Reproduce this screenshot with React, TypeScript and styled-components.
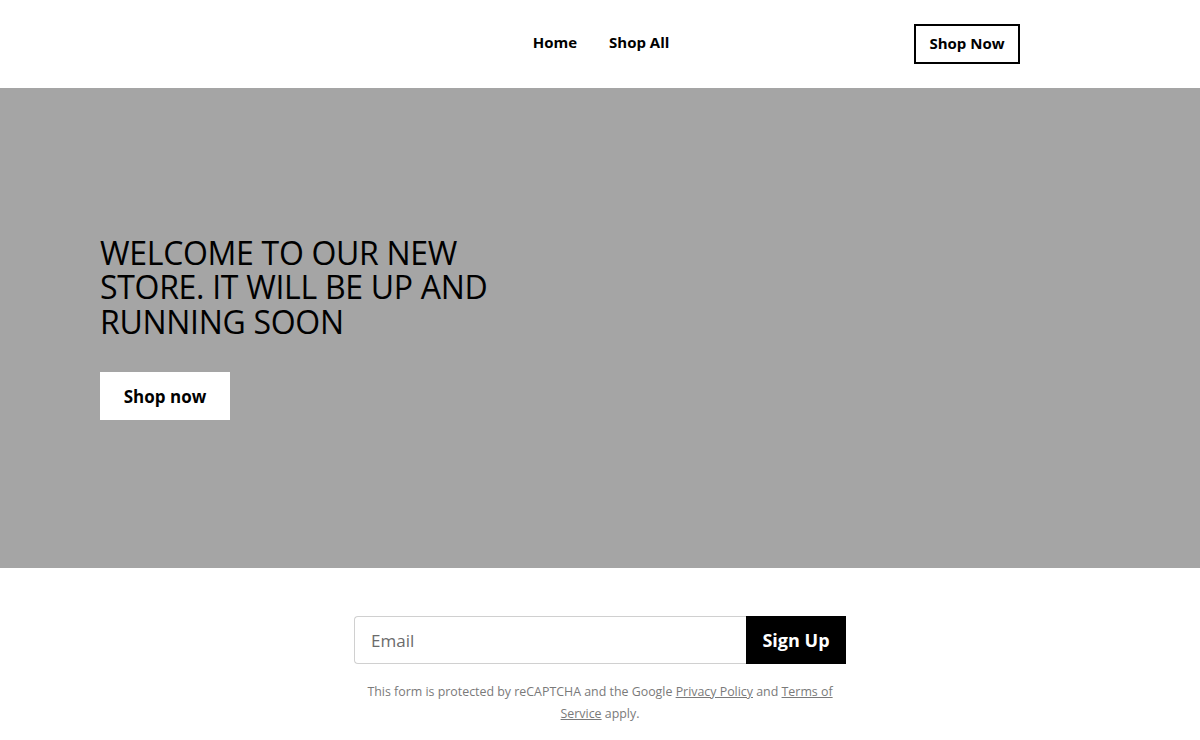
import styled, { createGlobalStyle } from "styled-components"

const GlobalStyle = createGlobalStyle`
    * { box-sizing: border-box; }
    body {
        margin: 0;
        font-family: "Open Sans", "Noto Sans", sans-serif;
        color: #000;
        background: #fff;
    }
`

const App = () => {
    return (
        <>
            <GlobalStyle />
            <Header>
                <HeaderInner>
                    <div />
                    <Nav>
                        <NavLink href="#">Home</NavLink>
                        <NavLink href="#">Shop All</NavLink>
                    </Nav>
                    <HeaderActions>
                        <OutlineButton>Shop Now</OutlineButton>
                    </HeaderActions>
                </HeaderInner>
            </Header>
            <Hero>
                <HeroTitle>WELCOME TO OUR NEW STORE. IT WILL BE UP AND RUNNING SOON</HeroTitle>
                <HeroButton>Shop now</HeroButton>
            </Hero>
            <Signup>
                <Form onSubmit={(e) => e.preventDefault()}>
                    <EmailInput placeholder="Email" />
                    <SubmitButton type="submit">Sign Up</SubmitButton>
                </Form>
                <Disclaimer>
                    This form is protected by reCAPTCHA and the Google <a href="#">Privacy Policy</a> and <a href="#">Terms of Service</a> apply.
                </Disclaimer>
            </Signup>
        </>
    )
}

export default App

const Header = styled.header`
    height: 88px;
    background: #fff;
`
const HeaderInner = styled.div`
    width: 840px;
    height: 100%;
    margin: 0 auto;
    display: grid;
    grid-template-columns: 1fr auto 1fr;
    align-items: center;
`
const Nav = styled.nav`
    display: flex;
    gap: 32px;
    margin-top: -4px;
    margin-left: 2px;
`
const NavLink = styled.a`
    color: #000;
    text-decoration: none;
    font-weight: 700;
    font-size: 15px;
`
const HeaderActions = styled.div`
    display: flex;
    justify-content: flex-end;
`
const OutlineButton = styled.button`
    height: 40px;
    width: 106px;
    padding: 0 0 2px;
    border: 2px solid #000;
    background: #fff;
    font-family: inherit;
    font-weight: 700;
    font-size: 15px;
    color: #000;
`
const Hero = styled.section`
    height: 480px;
    background: #a5a5a5;
    padding: 0 100px;
    display: flex;
    flex-direction: column;
    justify-content: center;
    align-items: flex-start;
`
const HeroTitle = styled.h1`
    margin: 0 0 33px;
    max-width: 420px;
    font-weight: 400;
    font-size: 32px;
    line-height: 34.5px;
    letter-spacing: -0.3px;
`
const HeroButton = styled.button`
    width: 130px;
    height: 48px;
    border: none;
    background: #fff;
    font-family: inherit;
    font-weight: 700;
    font-size: 17px;
    color: #000;
`
const Signup = styled.section`
    padding: 48px 0 0;
    display: flex;
    flex-direction: column;
    align-items: center;
`
const Form = styled.form`
    display: flex;
    width: 492px;
    height: 48px;
`
const EmailInput = styled.input`
    flex: 1;
    min-width: 0;
    border: 1px solid #d0d0d0;
    border-right: none;
    border-radius: 4px 0 0 4px;
    padding: 0 16px;
    font-family: inherit;
    font-size: 17px;
    color: #000;
    &::placeholder { color: #6b6b6b; }
`
const SubmitButton = styled.button`
    width: 100px;
    border: none;
    background: #000;
    color: #fff;
    font-family: inherit;
    font-weight: 700;
    font-size: 18px;
`
const Disclaimer = styled.p`
    margin: 17px 0 0;
    width: 480px;
    text-align: center;
    font-size: 12.4px;
    line-height: 22px;
    color: #7a7a7a;
    a { color: #7a7a7a; }
`
